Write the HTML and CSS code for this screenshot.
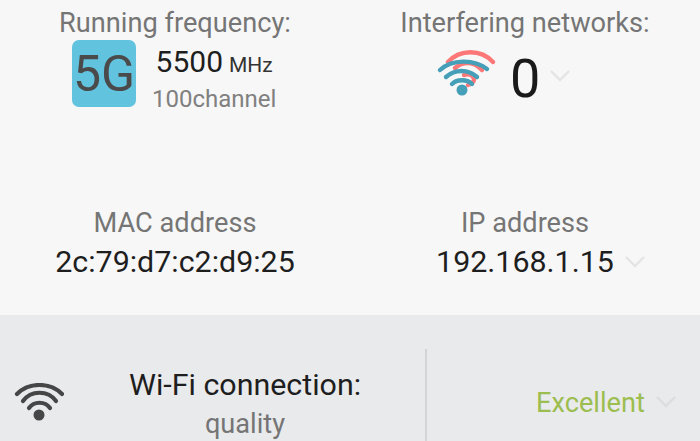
FILE: index.html

```html
<!doctype html>
<html lang="en">
	<head>
		<meta charset="UTF-8">
		<title>Wi-Fi details</title>
		<link rel="stylesheet" href="styles.css">
	</head>
	<body>
		<div class="details">
			<div class="cell cell-top">
				<div class="label">Running frequency:</div>
				<div class="freq">
					<div class="badge">5G</div>
					<div class="freq-text">
						<div class="mhz"><span class="mhz-num">5500</span> <span class="mhz-unit">MHz</span></div>
						<div class="channel">100channel</div>
					</div>
				</div>
			</div>
			<div class="cell cell-top">
				<div class="label">Interfering networks:</div>
				<div class="interfere">
					<svg class="wifi-double" width="60" height="50" viewBox="0 0 60 50" fill="none" stroke-linecap="round">
						<g stroke="#fc7878" stroke-width="4.4">
							<path d="M12 14C24 1 45 1 57 14"/>
							<path d="M19 20C27 13 38 13 46 22"/>
							<path d="M28 27C32 25 37 27 38 31C38 34 35 36 32 37"/>
						</g>
						<g stroke="#459fb8" stroke-width="4.4">
							<path d="M4 22C16 11 38 11 51 21"/>
							<path d="M10 29C19 21 32 21 41 29"/>
							<path d="M16 36C21 31 31 31 36 36"/>
						</g>
						<circle cx="26" cy="42" r="5.5" fill="#459fb8"/>
					</svg>
					<span class="count">0</span>
					<svg class="chev chev-count" width="22" height="14" viewBox="0 0 22 14"><path d="M2 2L11 11L20 2" fill="none" stroke="#e4e4e4" stroke-width="2.4"/></svg>
				</div>
			</div>
			<div class="cell cell-low">
				<div class="label">MAC address</div>
				<div class="value">2c:79:d7:c2:d9:25</div>
			</div>
			<div class="cell cell-low">
				<div class="label">IP address</div>
				<div class="value value-ip">192.168.1.15
					<svg class="chev" width="22" height="14" viewBox="0 0 22 14"><path d="M2 2L11 11L20 2" fill="none" stroke="#e4e4e4" stroke-width="2.4"/></svg>
				</div>
			</div>
		</div>
		<div class="quality">
			<svg class="wifi" width="50" height="40" viewBox="0 0 50 40" fill="none" stroke="#464646" stroke-width="4.2" stroke-linecap="round">
				<path d="M3 11C15 -1 36 -1 48 11"/>
				<path d="M9 18C17 7 34 7 42 18"/>
				<path d="M15 25C20 18 31 18 36 25"/>
				<circle cx="25" cy="32" r="5.5" fill="#464646" stroke="none"/>
			</svg>
			<div class="quality-title">
				<div class="quality-name">Wi-Fi connection:</div>
				<div class="quality-sub">quality</div>
			</div>
			<div class="quality-line"></div>
			<div class="quality-result">
				<span class="excellent">Excellent</span>
				<svg class="chev" width="22" height="14" viewBox="0 0 22 14"><path d="M2 2L11 11L20 2" fill="none" stroke="#dcdddf" stroke-width="2.4"/></svg>
			</div>
		</div>
	</body>
</html>
```

FILE: styles.css

```css
html, body {
	margin: 0;
	height: 441px;
	overflow: hidden;
}
body {
	background-color: #f7f7f7;
	font-family: Roboto, sans-serif;
	color: #1e1e1e;
}
.details {
	height: 315px;
	display: grid;
	grid-template-columns: 350px 350px;
	grid-template-rows: 196px 119px;
}
.cell {
	display: flex;
	flex-direction: column;
	align-items: center;
}
.cell-top {
	padding-top: 8px;
}
.cell-low {
	padding-top: 12px;
}
.label {
	font-size: 27.2px;
	line-height: 30px;
	color: #757575;
}
.value {
	font-size: 30.4px;
	line-height: 34px;
	margin-top: 7px;
	display: flex;
	align-items: center;
}
.value-ip {
	margin-left: 32px;
}
.value-ip .chev {
	margin-left: 10px;
}
.freq {
	display: flex;
	align-items: flex-start;
	gap: 16px;
	margin-top: 2px;
	align-self: flex-start;
	margin-left: 72px;
}
.badge {
	width: 64px;
	height: 67px;
	border-radius: 7px;
	background-color: #62c3df;
	color: #4a4a4a;
	font-size: 50px;
	line-height: 68px;
	text-align: center;
}
.freq-text {
	text-align: center;
	padding-top: 4px;
}
.mhz {
	line-height: 36px;
}
.mhz-num {
	font-size: 30px;
}
.mhz-unit {
	font-size: 21px;
	margin-left: 2px;
	color: #333;
}
.channel {
	font-size: 24px;
	line-height: 28px;
	color: #808080;
}
.interfere {
	display: flex;
	align-items: flex-start;
	margin-top: 10px;
	align-self: flex-start;
	margin-left: 86px;
}
.count {
	font-size: 54px;
	line-height: 62px;
	margin-left: 14px;
	color: #1a1a1a;
}
.chev-count {
	margin: 21px 0 0 9px;
}
.quality {
	height: 126px;
	background-color: #e9eaec;
	display: flex;
}
.wifi {
	margin: 68px 0 0 14px;
}
.quality-title {
	width: 361px;
	box-sizing: border-box;
	padding: 53px 0 0 1px;
	text-align: center;
}
.quality-name {
	font-size: 30.4px;
	line-height: 34px;
}
.quality-sub {
	font-size: 27.2px;
	line-height: 38px;
	margin-top: 3px;
	color: #757575;
}
.quality-line {
	width: 2px;
	margin-top: 34px;
	background-color: #d3d4d6;
}
.quality-result {
	flex: 1;
	display: flex;
	align-items: flex-start;
	padding: 71px 0 0 109px;
}
.excellent {
	font-size: 27.2px;
	line-height: 34px;
	color: #9cbd4f;
}
.quality-result .chev {
	margin: 9px 0 0 10px;
}
```
